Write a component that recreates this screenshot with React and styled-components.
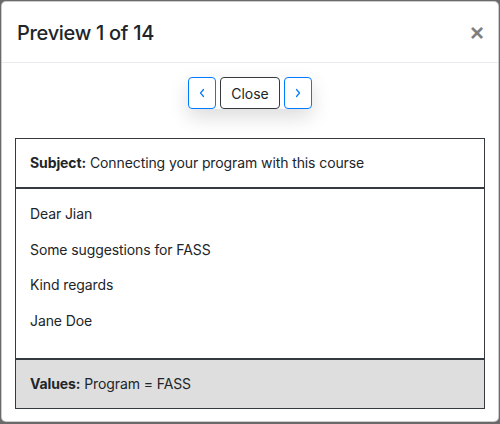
import React from 'react'
import styled, { createGlobalStyle } from 'styled-components'

const Global = createGlobalStyle`
  html, body { margin: 0; padding: 0; }
  body {
    width: 500px;
    height: 424px;
    overflow: hidden;
    background: #6a6a6a;
    font-family: Inter, "Liberation Sans", Arial, sans-serif;
    color: #212529;
  }
`

const Backdrop = styled.div`
  position: relative;
  width: 500px;
  height: 424px;
  overflow: hidden;
`

const BehindLinks = styled.div`
  display: flex;
  gap: 32px;
  margin-top: -14px;
  padding-left: 12px;
  font-size: 14px;
  line-height: 16px;
  color: #1c3e66;
`

const Modal = styled.div`
  position: absolute;
  left: 1px;
  top: 1px;
  width: 498px;
  height: 421px;
  box-sizing: border-box;
  background: #fff;
  border: 1px solid rgba(0, 0, 0, 0.2);
  border-radius: 5px;
  display: flex;
  flex-direction: column;
`

const Header = styled.div`
  flex-shrink: 0;
  box-sizing: border-box;
  display: flex;
  align-items: center;
  justify-content: space-between;
  height: 61px;
  padding: 1px 15px 0;
  border-bottom: 1px solid #e9ecef;
`

const Title = styled.h5`
  margin: 0;
  font-size: 20px;
  font-weight: 500;
  letter-spacing: -0.3px;
  color: #212529;
`

const CloseX = styled.button`
  border: 0;
  background: none;
  padding: 0;
  margin-right: -1px;
  font-family: "Liberation Sans", Arial, sans-serif;
  font-size: 24px;
  font-weight: 700;
  line-height: 1;
  color: #000;
  opacity: 0.5;
  cursor: pointer;
`

const Body = styled.div`
  flex-shrink: 0;
  padding: 14px 13px 12px 13px;
  display: flex;
  flex-direction: column;
  gap: 29px;
`

const Nav = styled.div`
  align-self: center;
  display: flex;
  gap: 4px;
  box-shadow: 0 8px 20px rgba(0, 0, 0, 0.14);
  border-radius: 4px;
`

const NavButton = styled.button`
  height: 32px;
  min-width: 28px;
  padding: ${p => (p.$arrow ? '0' : '0 10px')};
  display: flex;
  align-items: center;
  justify-content: center;
  background: #fff;
  border: 1px solid ${p => (p.$arrow ? '#007bff' : '#343a40')};
  border-radius: 4px;
  color: ${p => (p.$arrow ? '#007bff' : '#212529')};
  font-family: Inter, "Liberation Sans", Arial, sans-serif;
  font-size: 14px;
  cursor: pointer;
`

const Card = styled.div`
  border: 1px solid #343a40;
  font-size: 14px;
  line-height: 20px;
  letter-spacing: -0.1px;
`

const Subject = styled.div`
  padding: 14px 14px;
  border-bottom: 2px solid #343a40;
`

const Message = styled.div`
  padding: 15px 14px 27px;
  display: flex;
  flex-direction: column;
  gap: 15.67px;
`

const Para = styled.p`
  margin: 0;
`

const Values = styled.div`
  padding: 14px 14px;
  background: #dedede;
  border-top: 2px solid #343a40;
`

const Chevron = ({ dir }) => (
  <svg width="8" height="10" viewBox="0 0 8 10" fill="none">
    <path
      d={dir === 'left' ? 'M5.5 1.5 L2.5 5 L5.5 8.5' : 'M2.5 1.5 L5.5 5 L2.5 8.5'}
      stroke="#007bff"
      strokeWidth="1.2"
      strokeLinecap="round"
      strokeLinejoin="round"
    />
  </svg>
)

export default function App() {
  return (
    <>
      <Global />
      <Backdrop>
        <BehindLinks>
          <span>Table</span>
          <span>&amp; More</span>
        </BehindLinks>
        <Modal>
          <Header>
            <Title>Preview 1 of 14</Title>
            <CloseX aria-label="Close">×</CloseX>
          </Header>
          <Body>
            <Nav>
              <NavButton $arrow aria-label="Previous"><Chevron dir="left" /></NavButton>
              <NavButton>Close</NavButton>
              <NavButton $arrow aria-label="Next"><Chevron dir="right" /></NavButton>
            </Nav>
            <Card>
              <Subject><b>Subject:</b> Connecting your program with this course</Subject>
              <Message>
                <Para>Dear Jian</Para>
                <Para>Some suggestions for FASS</Para>
                <Para>Kind regards</Para>
                <Para>Jane Doe</Para>
              </Message>
              <Values><b>Values:</b> Program = FASS</Values>
            </Card>
          </Body>
        </Modal>
      </Backdrop>
    </>
  )
}
